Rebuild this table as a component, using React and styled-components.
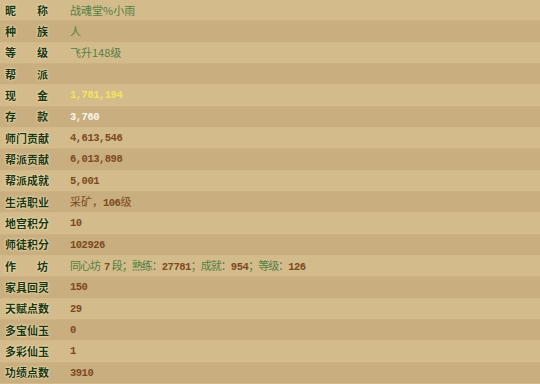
import React from "react";
import styled, { createGlobalStyle } from "styled-components";

const GlobalStyle = createGlobalStyle`
  html, body {
    margin: 0;
    padding: 0;
    background: #d3bb8c;
  }
`;

const rows = [
  { label: "昵称", parts: [{ text: "战魂堂%小雨", tone: "green" }] },
  { label: "种族", parts: [{ text: "人", tone: "green" }] },
  { label: "等级", parts: [{ text: "飞升148级", tone: "green" }] },
  { label: "帮派", parts: [] },
  { label: "现金", parts: [{ text: "1,781,194", tone: "gold", num: true }] },
  { label: "存款", parts: [{ text: "3,760", tone: "white", num: true }] },
  { label: "师门贡献", parts: [{ text: "4,613,546", tone: "brown", num: true }] },
  { label: "帮派贡献", parts: [{ text: "6,013,898", tone: "brown", num: true }] },
  { label: "帮派成就", parts: [{ text: "5,001", tone: "brown", num: true }] },
  {
    label: "生活职业",
    parts: [
      { text: "采矿，", tone: "brown" },
      { text: "106", tone: "brown", num: true },
      { text: "级", tone: "brown" },
    ],
  },
  { label: "地宫积分", parts: [{ text: "10", tone: "brown", num: true }] },
  { label: "师徒积分", parts: [{ text: "102926", tone: "brown", num: true }] },
  {
    label: "作坊",
    tight: true,
    parts: [
      { text: "同心坊", tone: "green" },
      { text: "7", tone: "brown", num: true, pad: true },
      { text: "段；熟练：", tone: "green" },
      { text: "27781", tone: "brown", num: true },
      { text: "；成就：", tone: "green" },
      { text: "954", tone: "brown", num: true },
      { text: "；等级：", tone: "green" },
      { text: "126", tone: "brown", num: true },
    ],
  },
  { label: "家具回灵", parts: [{ text: "150", tone: "brown", num: true }] },
  { label: "天赋点数", parts: [{ text: "29", tone: "brown", num: true }] },
  { label: "多宝仙玉", parts: [{ text: "0", tone: "brown", num: true }] },
  { label: "多彩仙玉", parts: [{ text: "1", tone: "brown", num: true }] },
  { label: "功绩点数", parts: [{ text: "3910", tone: "brown", num: true }] },
];

const tones = {
  green: "#537f42",
  brown: "#7d4a1d",
  gold: "#f3e45c",
  white: "#fbf6e8",
};

export default function App() {
  return (
    <>
      <GlobalStyle />
      <Sheet>
        {rows.map((row, i) => (
          <Row key={row.label} dark={i % 2 === 1}>
            <Label>
              {row.label.split("").map((ch, j) => (
                <span key={j}>{ch}</span>
              ))}
            </Label>
            <Value>
              {row.parts.map((p, j) => (
                <Part key={j} tone={p.tone} num={p.num} pad={p.pad} tight={row.tight}>
                  {p.text}
                </Part>
              ))}
            </Value>
          </Row>
        ))}
      </Sheet>
    </>
  );
}

const Sheet = styled.div`
  width: 540px;
  height: 384px;
  display: grid;
  grid-template-rows: repeat(18, 1fr);
  overflow: hidden;
`;

const Row = styled.div`
  display: flex;
  align-items: center;
  background: ${(props) => (props.dark ? "#c9ae80" : "#d3bb8c")};
  border-bottom: 1px solid ${(props) => (props.dark ? "#d2b98a" : "#cdb384")};
`;

const Label = styled.div`
  width: 43px;
  margin-left: 5px;
  display: flex;
  justify-content: space-between;
  font-family: "Noto Sans CJK SC", sans-serif;
  font-weight: 700;
  font-size: 11px;
  line-height: 1;
  color: #1a3510;
  text-shadow: 0 0 2px #f2e2b6, 0 0 1px #f2e2b6, 0 0 3px #ead6a4;
`;

const Value = styled.div`
  margin-left: 22px;
  display: flex;
  align-items: baseline;
  white-space: pre;
  line-height: 1;
`;

const Part = styled.span`
  color: ${(props) => tones[props.tone]};
  font-family: ${(props) =>
    props.num ? '"Liberation Mono", monospace' : '"Noto Sans CJK SC", sans-serif'};
  font-size: ${(props) => (props.num ? "10.5px" : "11px")};
  font-weight: ${(props) => (props.num ? 700 : 400)};
  letter-spacing: ${(props) => (props.num ? "-0.5px" : props.tight ? "-1px" : "0")};
  margin: ${(props) => (props.pad ? "0 2px 0 4px" : "0")};
`;
